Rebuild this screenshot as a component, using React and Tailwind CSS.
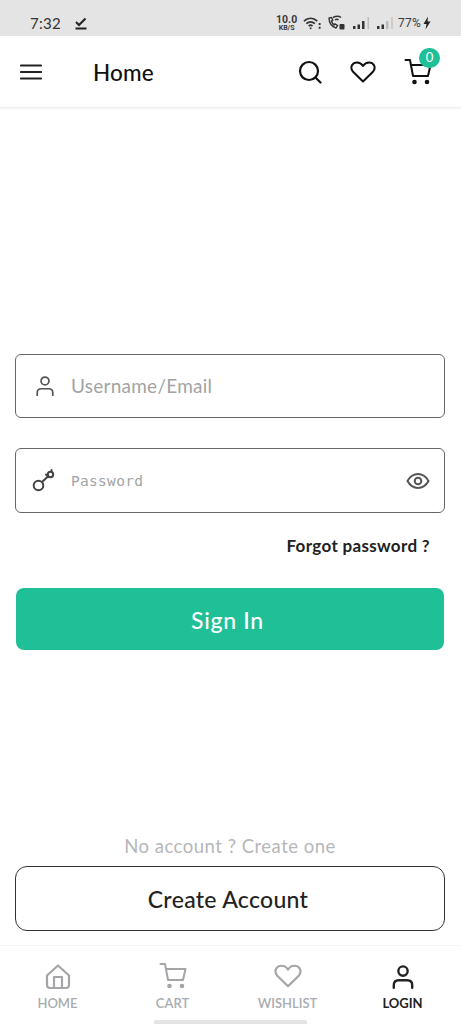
import React from "react";

function StatusIcons() {
  return (
    <div className="flex items-center text-[#3a3a3a]">
      <div className="flex flex-col items-center w-[21px] font-bold font-['Roboto',sans-serif]">
        <span className="text-[10.500px] leading-[9px]">10.0</span>
        <span className="mt-[1px] text-[7px] leading-[7px]">KB/S</span>
      </div>
      <svg className="ml-[6px]" width="19" height="16" viewBox="0 0 20 16" fill="none" stroke="#333" strokeWidth="1.800">
        <path d="M1 6c4-4 10-4 14 0" />
        <path d="M3.500 8.700c3-2.600 6-2.600 9 0" />
        <path d="M6 11.200c1.500-1.300 2.500-1.300 4 0" />
        <circle cx="8" cy="13.500" r="1" fill="#333" stroke="none" />
        <path d="M17.500 8v2M17.500 12v2" strokeWidth="2" />
      </svg>
      <svg className="ml-[5px]" width="19" height="16" viewBox="0 0 19 16" fill="none" stroke="#333" strokeWidth="1.400">
        <path d="M2 3c0 5 3 9 7 10l1.500-2.500-2.500-1.500-1 1c-1-1-2-2.500-2.500-4l1.300-.8L4.500 2.500z" />
        <path d="M6 2.500c3-1.500 6-1.500 8 0M8 5c1.500-1 2.500-1 3.500 0" />
        <rect x="12.500" y="9" width="5" height="5.500" rx="1" fill="#333" stroke="none" />
      </svg>
      <svg className="ml-[7px]" width="18" height="14" viewBox="0 0 18 14">
        <rect x="0" y="10" width="2.500" height="3" fill="#333" />
        <rect x="4.500" y="8.500" width="2.500" height="4.500" fill="#333" />
        <rect x="9" y="5" width="2.500" height="8" fill="#333" />
        <rect x="14.500" y="1" width="1.500" height="12" fill="#bbb" />
      </svg>
      <svg className="ml-[6px]" width="18" height="14" viewBox="0 0 18 14">
        <rect x="0" y="10" width="2.500" height="3" fill="#333" />
        <rect x="4.500" y="8.500" width="2.500" height="4.500" fill="#333" />
        <rect x="9" y="5" width="2.500" height="8" fill="#bbb" />
        <rect x="14" y="1" width="2" height="12" fill="#ccc" />
      </svg>
      <span className="ml-[3px] text-[12px] tracking-[0.2px] font-['Roboto',sans-serif]">77%</span>
      <svg className="ml-[2px]" width="8" height="14" viewBox="0 0 8 14">
        <path d="M5 0.500 0.500 8h3L2.500 13.500 7.500 5.500h-3z" fill="#222" />
      </svg>
    </div>
  );
}

const Cart = ({ color = "#111", w = 2, size = 28 }) => (
  <svg width={size} height={size} viewBox="0 0 28 28" fill="none" stroke={color} strokeWidth={w} strokeLinecap="round" strokeLinejoin="round">
    <path d="M1.500 2h4.500l3 16h15l2.500-11H7" />
    <circle cx="10.500" cy="24" r="1.300" fill={color} />
    <circle cx="23" cy="24" r="1.300" fill={color} />
  </svg>
);

const Heart = ({ color = "#111", w = 2, size = 26 }) => (
  <svg width={size} height={size} viewBox="0 0 26 24" fill="none" stroke={color} strokeWidth={w} strokeLinejoin="round">
    <path d="M13 21.500 2.800 11.500C-.5 7 2.500 2.500 7 2.500c2.500 0 4.500 1.200 6 3.500 1.500-2.300 3.500-3.500 6-3.500 4.500 0 7.500 4.500 4.200 9z" />
  </svg>
);

const Person = ({ color = "#111", w = 2, size = 24 }) => (
  <svg width={size} height={size} viewBox="0 0 24 24" fill="none" stroke={color} strokeWidth={w} strokeLinecap="round">
    <circle cx="12" cy="6.500" r="4.300" />
    <path d="M3.500 22v-2.500c0-3 2-4.500 4.500-4.500h8c2.500 0 4.500 1.500 4.500 4.500V22" />
  </svg>
);

function NavItem({ icon, label, active }) {
  return (
    <div className="flex flex-col items-center w-[115px]">
      <div className="h-[30px] flex items-end justify-center">{icon}</div>
      <span className={`mt-[5px] text-[13px] leading-[16px] ${active ? "text-[#222] font-bold" : "text-[#a9abaf] font-semibold"}`}>{label}</span>
    </div>
  );
}

export default function App() {
  return (
    <div className="w-[461px] h-[1024px] bg-white flex flex-col overflow-hidden font-['Lato',sans-serif]">
      <div className="h-[36px] bg-[#e4e4e4] flex items-center justify-between pl-[30px] pr-[30px] pt-[10px] shrink-0">
        <div className="flex items-center">
          <span className="text-[15px] text-[#333] tracking-[0.3px]">7:32</span>
          <svg className="ml-[14px]" width="12" height="13" viewBox="0 0 12 13" fill="none" stroke="#222" strokeWidth="2">
            <path d="M1 5l3 3 6.500-6.500" />
            <path d="M0.500 11.500h11" />
          </svg>
        </div>
        <StatusIcons />
      </div>

      <header className="h-[72px] shrink-0 flex items-center pl-[20px] pr-[29px] border-b border-[#eeeeee] shadow-[0_1px_2px_rgba(0,0,0,0.05)]">
        <svg width="22" height="16" viewBox="0 0 22 16" stroke="#222" strokeWidth="2.200" strokeLinecap="round">
          <path d="M1 1.500h20M1 8h20M1 14.500h20" />
        </svg>
        <span className="ml-[51px] mt-[4px] text-[22.500px] text-[#111] font-medium leading-none tracking-[0.2px]">Home</span>
        <div className="ml-auto flex items-center">
          <svg width="24" height="24" viewBox="0 0 24 24" fill="none" stroke="#111" strokeWidth="2.200" strokeLinecap="round">
            <circle cx="11" cy="11" r="9" />
            <path d="M18 18l4.500 4.500" />
          </svg>
          <span className="ml-[28px] flex"><Heart /></span>
          <div className="relative ml-[28px] w-[28px] h-[28px]">
            <Cart />
            <span className="absolute -top-[10px] left-[15px] w-[21px] h-[20px] rounded-full bg-[#1fbf97] text-white text-[13px] flex items-center justify-center">0</span>
          </div>
        </div>
      </header>

      <main className="flex-1 flex flex-col pl-[15px] pr-[16px]">
        <div className="mt-[246px] h-[64px] border border-[#666] rounded-[6px] flex items-center pl-[18px]">
          <Person color="#555" w={1.900} size={22} />
          <span className="ml-[15px] text-[19px] text-[#a3a3a3] tracking-[0.25px]">Username/Email</span>
        </div>
        <div className="mt-[30px] h-[65px] border border-[#666] rounded-[6px] flex items-center pl-[16px] pr-[14px]">
          <svg width="24" height="24" viewBox="0 0 24 24" fill="none" stroke="#444" strokeWidth="2" strokeLinecap="round">
            <circle cx="6.500" cy="16.500" r="4.800" />
            <path d="M10 13l6-5.500" />
            <circle cx="18.500" cy="5.500" r="2.700" />
            <path d="M14 5.500l2.500 2.500M19.500 1v1" />
          </svg>
          <span className="ml-[15px] mt-[2px] text-[14.500px] text-[#a3a3a3] font-['DejaVu_Sans_Mono',monospace] tracking-[0.3px]">Password</span>
          <svg className="ml-auto" width="24" height="24" viewBox="0 0 24 24" fill="none" stroke="#555" strokeWidth="2">
            <path d="M1.500 12C4 7.500 8 5 12 5s8 2.500 10.500 7c-2.500 4.500-6.500 7-10.500 7S4 16.500 1.500 12z" />
            <circle cx="12" cy="12" r="3.300" />
          </svg>
        </div>
        <div className="mt-[23px] pr-[15px] text-right text-[17px] leading-[20px] font-bold text-[#222] tracking-[0.33px]">Forgot password ?</div>
        <div className="mt-[32px] mx-[1px] h-[62px] rounded-[8px] bg-[#1fbf97] flex items-center justify-center pr-[5px] pt-[2px] text-white text-[23px] font-medium tracking-[0.7px]">Sign In</div>
        <div className="mt-auto text-center text-[18.500px] leading-[24px] text-[#b5b7ba] tracking-[0.5px]">No account ? Create one</div>
        <div className="mt-[8px] h-[65px] border border-[#333] rounded-[12px] flex items-center justify-center pr-[4px] pt-[2px] text-[23px] text-[#222] font-medium tracking-[0.3px]">Create Account</div>
        <div className="h-[14px]" />
      </main>

      <nav className="relative h-[79px] shrink-0 border-t border-[#f3f3f3] flex pt-[14px]">
        <NavItem label="HOME" icon={
          <svg width="26" height="26" viewBox="0 0 26 26" fill="none" stroke="#a3a5a9" strokeWidth="2.200" strokeLinejoin="round">
            <path d="M2 11.500 13 1.500l11 10V21a3 3 0 0 1-3 3H5a3 3 0 0 1-3-3z" />
            <path d="M9 24V13h8v11" />
          </svg>} />
        <NavItem label="CART" icon={<Cart color="#a3a5a9" />} />
        <NavItem label="WISHLIST" icon={<Heart color="#a3a5a9" size={28} />} />
        <NavItem label="LOGIN" active icon={<Person color="#222" w={2.200} size={26} />} />
        <div className="absolute left-[154px] bottom-0 w-[153px] h-[4px] rounded-t-[2px] bg-[#e4e4e4]" />
      </nav>
    </div>
  );
}
